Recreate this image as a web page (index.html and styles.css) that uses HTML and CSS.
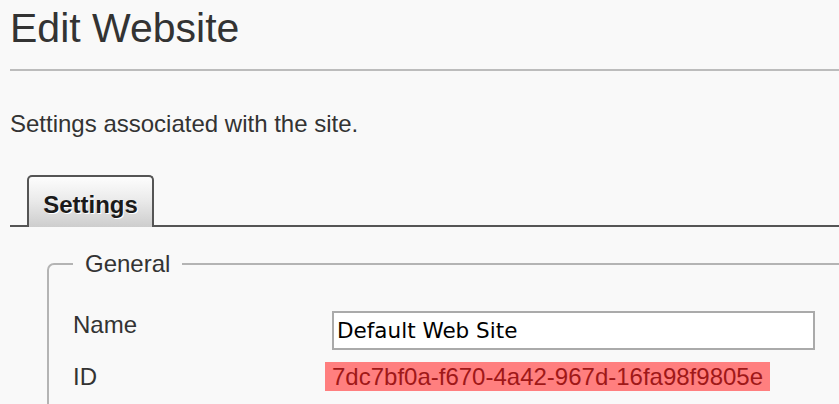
FILE: index.html
```html
<!DOCTYPE html>
<html>
<head>
<meta charset="utf-8">
<link rel="stylesheet" href="styles.css">
</head>
<body>
<div class="page">
  <h1 class="title">Edit Website</h1>
  <p class="desc">Settings associated with the site.</p>
  <div class="tabs">
    <div class="tab">Settings</div>
  </div>
  <fieldset class="group">
    <legend class="group-title">General</legend>
    <div class="form">
      <div class="label label-name">Name</div>
      <div class="value"><input class="text-input" type="text" value="Default Web Site"></div>
      <div class="label">ID</div>
      <div class="value"><span class="id-mark">7dc7bf0a-f670-4a42-967d-16fa98f9805e</span></div>
    </div>
  </fieldset>
</div>
</body>
</html>
```
FILE: styles.css
```css
html, body {
  margin: 0;
  padding: 0;
  background: #f9f9f9;
  overflow: hidden;
}
body {
  font-family: "Liberation Sans", Arial, sans-serif;
  color: #333;
}
.page {
  padding: 0 0 0 10px;
}
.title {
  margin: 0;
  padding: 5px 0 18px;
  font-size: 41px;
  line-height: 46px;
  font-weight: normal;
  color: #333;
  border-bottom: 2px solid #bcbcbc;
}
.desc {
  margin: 39px 0 0;
  font-size: 24px;
  line-height: 28px;
}
.tabs {
  margin-top: 37px;
  display: flex;
  border-bottom: 2px solid #555;
  padding-left: 17px;
}
.tab {
  margin-bottom: -2px;
  width: 123px;
  box-sizing: content-box;
  padding: 14px 0 8px;
  text-align: center;
  font-size: 24px;
  line-height: 28px;
  font-weight: bold;
  color: #1a1a1a;
  text-shadow: 1px 1px 0 #fff;
  border: 2px solid #555;
  border-bottom: none;
  border-radius: 5px 5px 0 0;
  background: linear-gradient(to bottom, #fdfdfd 0%, #ebebeb 45%, #cdcdcd 100%);
}
.group {
  margin: 23px -60px 0 37px;
  padding: 30px 24px 40px;
  border: 2px solid #b4b4b4;
  border-radius: 7px;
  min-width: 0;
}
.group-title {
  padding: 0 12px;
  font-size: 24px;
  line-height: 28px;
  color: #333;
}
.form {
  display: grid;
  grid-template-columns: 259px 1fr;
  row-gap: 13px;
  align-items: start;
}
.label {
  font-size: 24px;
  line-height: 28px;
  color: #333;
}
.label-name {
  margin-top: 3px;
}
.value {
  font-size: 24px;
  line-height: 28px;
}
.text-input {
  display: block;
  margin: 3px 0 0;
  width: 483px;
  height: 39px;
  box-sizing: border-box;
  border: 2px solid #aaa;
  padding: 0 3px;
  background: #fff;
  font-family: "DejaVu Sans", sans-serif;
  font-size: 21.5px;
  color: #000;
  outline: none;
}
.id-mark {
  margin-left: -7px;
  padding: 1px 7px;
  background: #ff7f7f;
  color: #a01818;
}
```
